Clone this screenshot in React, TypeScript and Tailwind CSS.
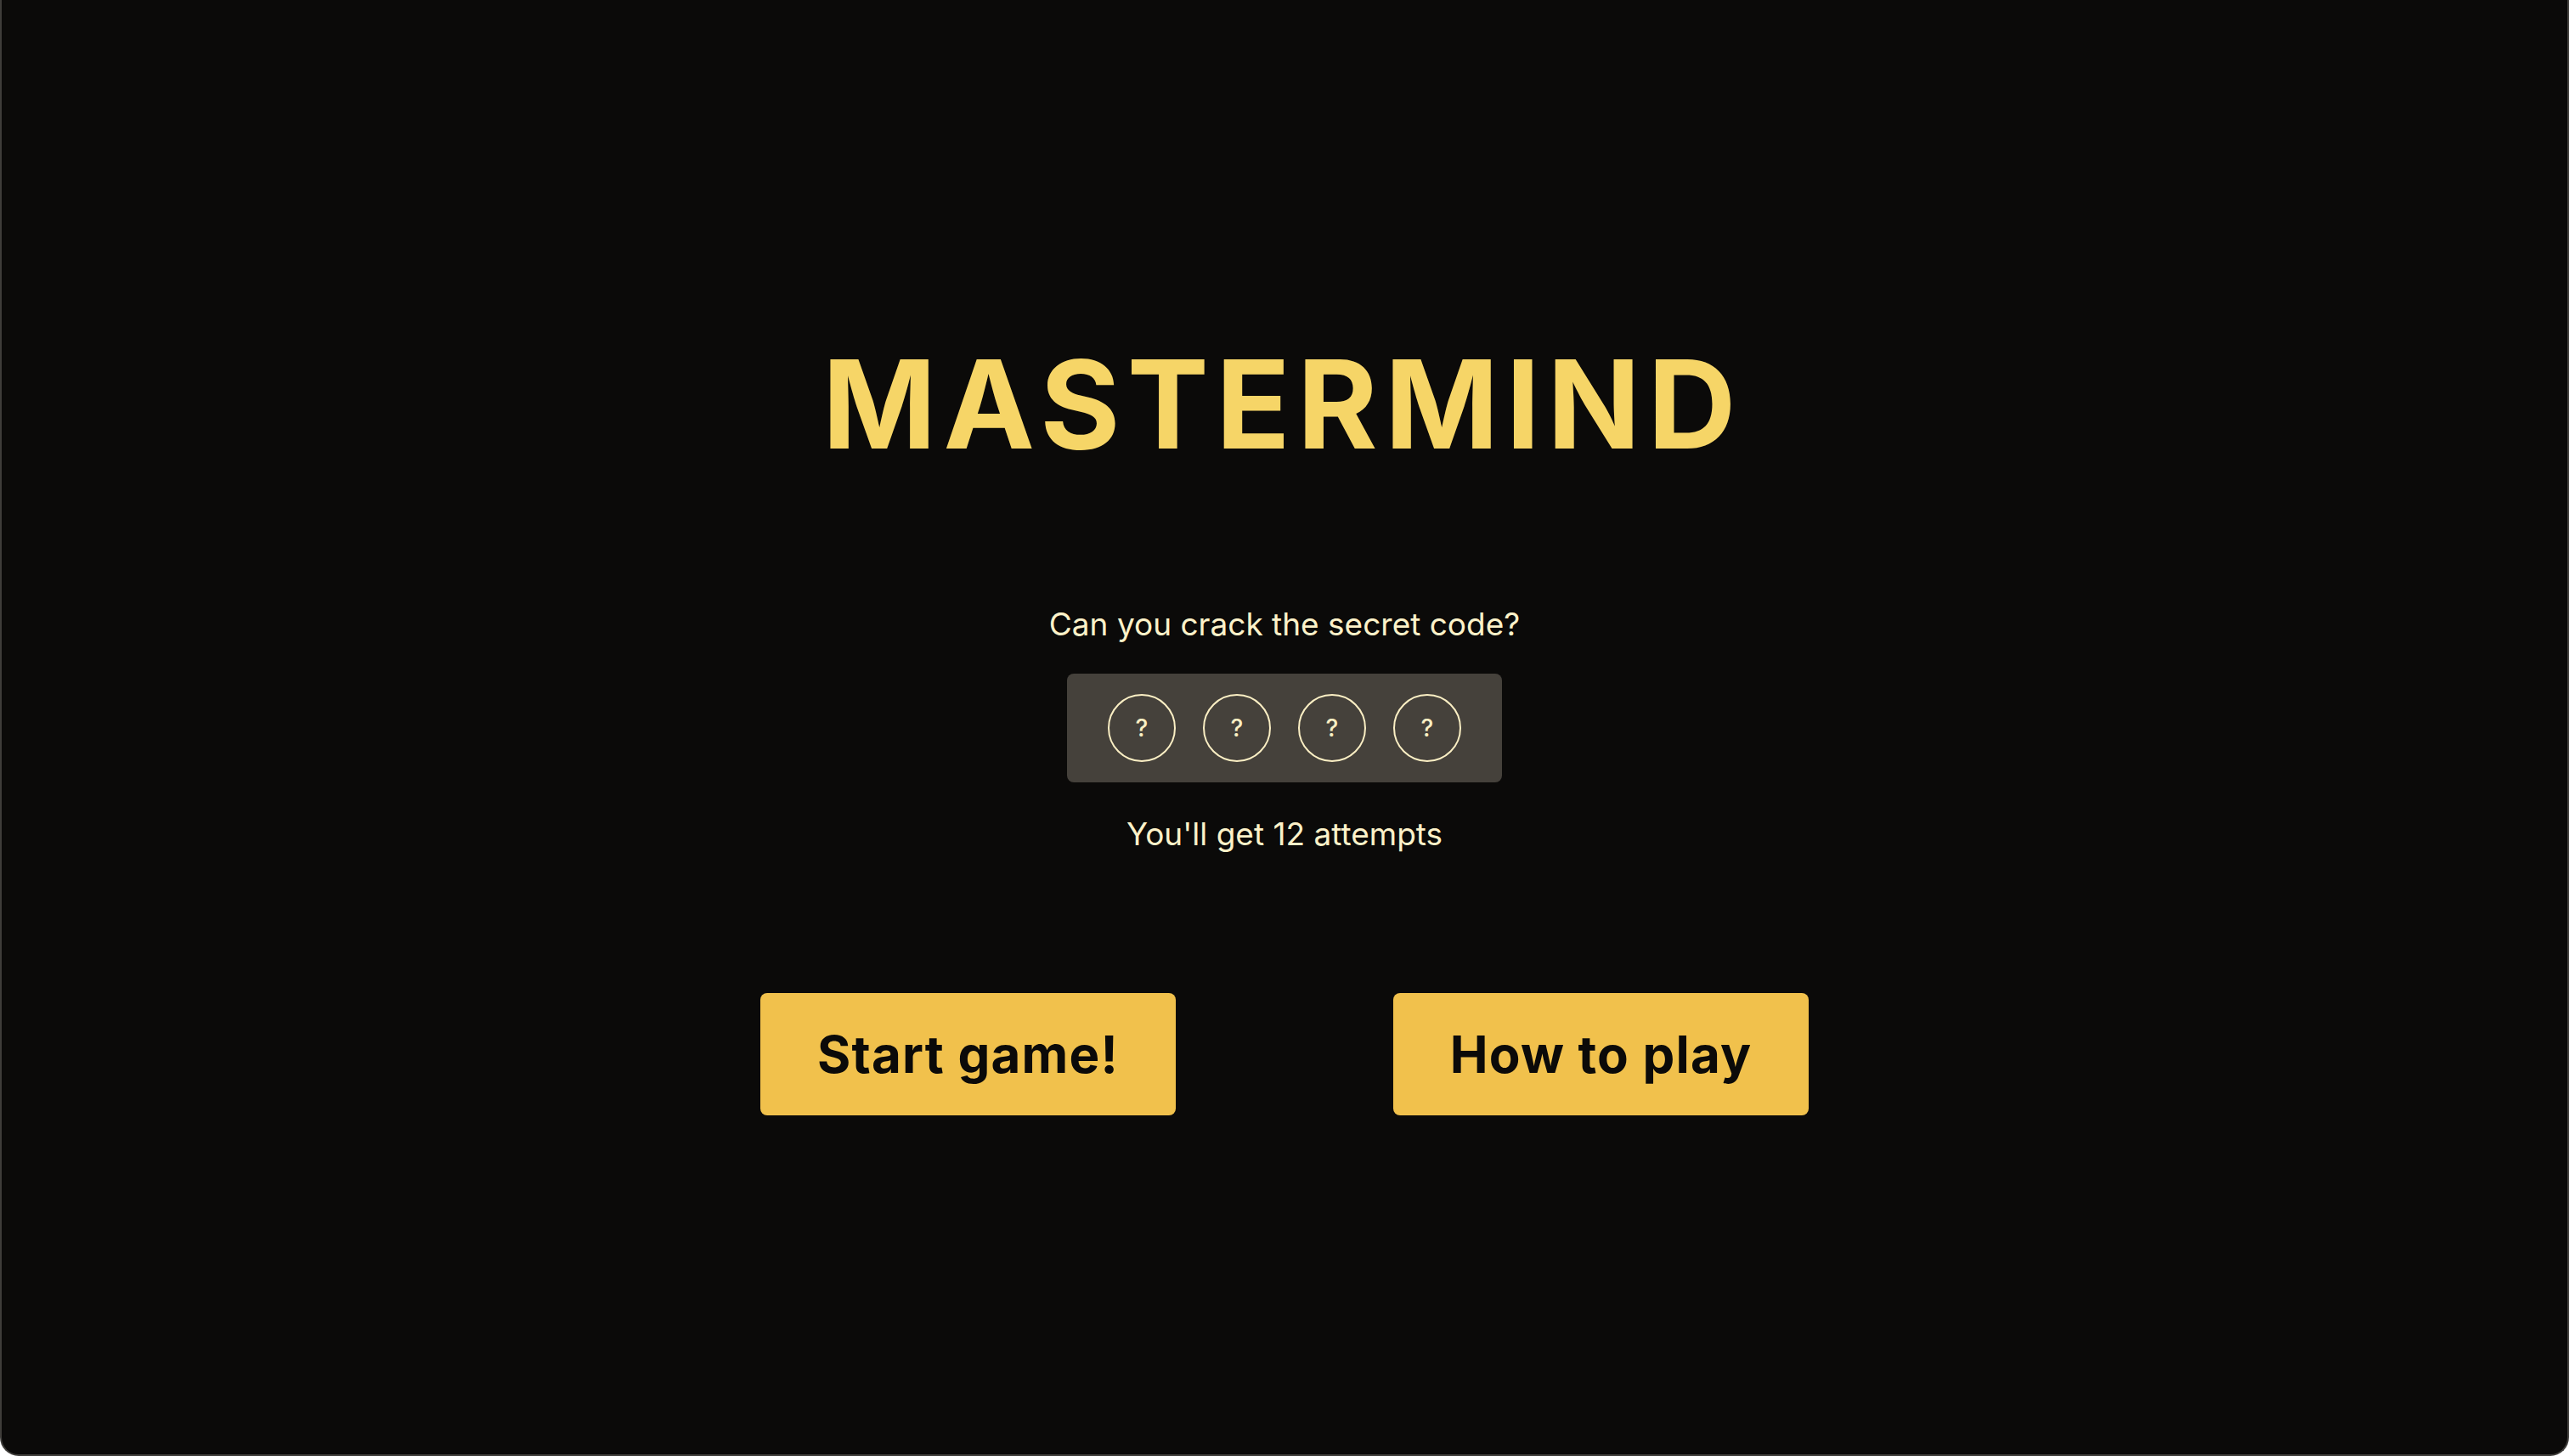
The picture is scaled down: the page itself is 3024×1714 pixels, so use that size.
const Peg = () => (
  <div className="w-20 h-20 rounded-full border-2 border-[#fbefc4] flex items-center justify-center text-[28px] font-medium text-[#fbefc4] leading-none">
    ?
  </div>
);

const App = () => {
  return (
    <div className="h-screen w-full bg-[#0b0a09] border-x-2 border-b-2 border-[#3f3d3a] rounded-b-[22px] flex flex-col items-center font-['Inter',sans-serif]">
      <h1 className="mt-[404px] text-[144px] leading-none font-bold tracking-[0.058em] text-[#f6d567] pr-[0.03em]">
        MASTERMIND
      </h1>
      <p className="mt-[168px] text-[37px] leading-none text-[#fdf2c9]">Can you crack the secret code?</p>
      <div className="mt-10 flex gap-8 px-12 py-6 bg-[#45413b] rounded-lg">
        {[0, 1, 2, 3].map((i) => (
          <Peg key={i} />
        ))}
      </div>
      <p className="mt-[42px] text-[37px] leading-none text-[#fdf2c9]">You'll get 12 attempts</p>
      <div className="mt-[169px] flex gap-[256px]">
        {["Start game!", "How to play"].map((label) => (
          <button
            key={label}
            className="w-[489px] h-[144px] rounded-lg bg-[#f1c14c] text-[60px] font-bold tracking-[0.02em] text-[#0b0a09] cursor-pointer"
          >
            {label}
          </button>
        ))}
      </div>
    </div>
  );
};

export default App;
